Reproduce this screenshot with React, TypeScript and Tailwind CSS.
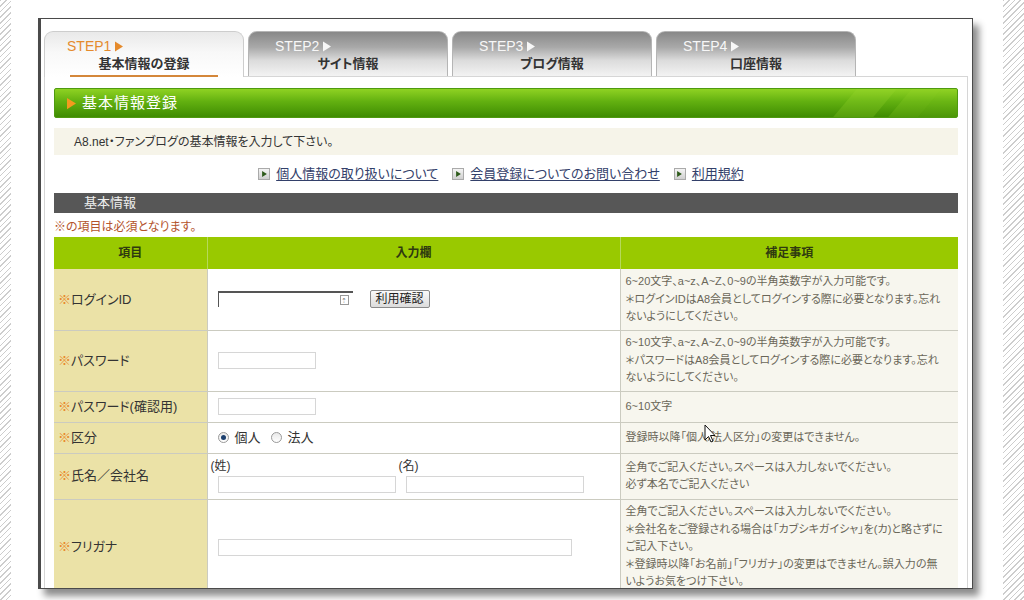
import type { ReactNode } from "react";

const hatch =
  "bg-[repeating-linear-gradient(135deg,#cdcdcd_0px,#cdcdcd_1px,transparent_1px,transparent_4px)]";

function Tri({ className }: { className: string }) {
  return (
    <svg viewBox="0 0 8 10" className={className}>
      <polygon points="0,0 8,5 0,10" fill="currentColor" />
    </svg>
  );
}

function Tab({ step, label, active }: { step: string; label: string; active?: boolean }) {
  if (active) {
    return (
      <div className="relative z-10 -mb-px h-[46px] w-[200px] rounded-t-[9px] border border-b-0 border-[#cdcdcd] bg-[linear-gradient(to_bottom,#e9e9e9,#f8f8f8_45%,#ffffff)]">
        <div className="flex items-center gap-[4px] pl-[22px] pt-[6px] text-[14px] leading-[16px] text-[#e58a2c]">
          {step}
          <Tri className="h-[11px] w-[8px]" />
        </div>
        <div className="mx-[25px] mt-[1px] border-b-2 border-[#d4873a] pb-[2px] text-center text-[13px] leading-[18px] font-bold text-[#333]">
          {label}
        </div>
      </div>
    );
  }
  return (
    <div className="h-[45px] w-[200px] rounded-t-[9px] border border-b-0 border-[#b5b5b5] bg-[linear-gradient(to_bottom,#888888,#a9a9a9_35%,#dcdcdc_65%,#f3f3f3)]">
      <div className="flex items-center gap-[4px] pl-[26px] pt-[6px] text-[14px] leading-[16px] text-[#f7f7f7]">
        {step}
        <Tri className="h-[11px] w-[8px]" />
      </div>
      <div className="mt-[1px] text-center text-[13px] leading-[18px] font-bold text-[#333]">{label}</div>
    </div>
  );
}

function LinkItem({ children }: { children: ReactNode }) {
  return (
    <span className="flex items-center gap-[6px]">
      <span className="flex h-[12px] w-[12px] items-center justify-center border border-[#aaa] bg-[linear-gradient(to_bottom,#f4f4f4,#cfcfcf)]">
        <Tri className="h-[6px] w-[5px] text-[#2d5a1a]" />
      </span>
      <span className="text-[13px] text-[#33406a] underline underline-offset-2">{children}</span>
    </span>
  );
}

function Label({ children }: { children: ReactNode }) {
  return (
    <td className="border-b border-r border-[#cbcbc0] bg-[#ebe2a7] pl-[4px] text-[13px] text-[#333]">
      <span className="text-[#e8892a]">※</span>
      {children}
    </td>
  );
}

function Note({ lines }: { lines: string[] }) {
  return (
    <td className="border-b border-[#cbcbc0] bg-[#f7f6ee] pl-[5px] align-middle text-[11px] leading-[17.4px] whitespace-nowrap text-[#6a6658]">
      {lines.map((l) => (
        <div key={l}>{l}</div>
      ))}
    </td>
  );
}

function TextBox({ w }: { w: string }) {
  return <div className={`${w} h-[17px] border border-[#d6d6d6] bg-white`} />;
}

function Radio({ on }: { on?: boolean }) {
  return (
    <span className="flex h-[11px] w-[11px] items-center justify-center rounded-full border border-[#9a9a9a] bg-[linear-gradient(to_bottom,#e8e8e8,#fff)]">
      {on && <span className="h-[5px] w-[5px] rounded-full bg-[#1c3f6e]" />}
    </span>
  );
}

export default function App() {
  return (
    <div className="relative flex h-[600px] w-[1024px] overflow-hidden bg-white [font-family:'Liberation_Sans','Noto_Sans_CJK_JP',sans-serif] [font-feature-settings:'palt']">
      <div className={`h-full w-[11px] shrink-0 ${hatch}`} />

      <div className="ml-[27px] mt-[18px] h-[571px] w-[935px] shrink-0 overflow-hidden border border-l-[3px] border-[#4a4a4a] border-l-double bg-white pl-[3px] pr-[4px] pt-[12px] shadow-[6px_7px_7px_rgba(0,0,0,0.45)]">
        <div className="flex items-end gap-[4px]">
          <Tab step="STEP1" label="基本情報の登録" active />
          <Tab step="STEP2" label="サイト情報" />
          <Tab step="STEP3" label="ブログ情報" />
          <Tab step="STEP4" label="口座情報" />
        </div>

        <div className="h-[600px] border border-[#d6d6d6] px-[9px] pt-[11px]">
          <div className="relative flex h-[30px] items-center overflow-hidden rounded-[2px] border border-[#4f9a10] bg-[linear-gradient(to_bottom,#8fd223,#62b010_45%,#3f8c02)] pl-[12px]">
            <Tri className="h-[13px] w-[9px] text-[#f39a1e]" />
            <span className="ml-[6px] text-[15px] tracking-[1px] text-white">基本情報登録</span>
            <div className="absolute left-[790px] top-0 h-full w-[40px] -skew-x-[40deg] bg-[#9ad92e]/25" />
            <div className="absolute left-[845px] top-0 h-full w-[30px] -skew-x-[40deg] bg-[#9ad92e]/20" />
            <div className="absolute left-[875px] top-0 h-full w-[40px] -skew-x-[40deg] bg-[#9ad92e]/15" />
          </div>

          <div className="mt-[10px] flex h-[27px] items-center bg-[#f6f4e9] pl-[20px] text-[12px] text-[#333]">
            A8.net・ファンブログの基本情報を入力して下さい。
          </div>

          <div className="flex h-[38px] items-center justify-center gap-[14px] pr-[10px]">
            <LinkItem>個人情報の取り扱いについて</LinkItem>
            <LinkItem>会員登録についてのお問い合わせ</LinkItem>
            <LinkItem>利用規約</LinkItem>
          </div>

          <div className="flex h-[20px] items-center bg-[#575757] pl-[30px] text-[13px] text-[#eee]">基本情報</div>

          <div className="flex h-[24px] items-center pt-[4px] text-[12px] text-[#b4532c]">※の項目は必須となります。</div>

          <table className="w-[904px] table-fixed border-collapse">
            <colgroup>
              <col className="w-[153px]" />
              <col className="w-[413px]" />
              <col className="w-[338px]" />
            </colgroup>
            <thead>
              <tr className="h-[32px] bg-[#99c900] text-[12px] font-bold text-[#2f3a10]">
                <th className="border-r border-[#b6d95a]">項目</th>
                <th className="border-r border-[#b6d95a]">入力欄</th>
                <th>補足事項</th>
              </tr>
            </thead>
            <tbody>
              <tr className="h-[61px]">
                <Label>ログインID</Label>
                <td className="border-b border-r border-[#cbcbc0] pl-[10px]">
                  <div className="flex items-center gap-[17px]">
                    <div className="flex h-[16px] w-[135px] items-center justify-end border-l border-t-2 border-[#555] pr-[4px]">
                      <span className="flex h-[10px] w-[9px] items-center justify-center border border-[#999] text-[7px] leading-none text-[#777]">
                        ⇡
                      </span>
                    </div>
                    <button className="h-[18px] rounded-[2px] border border-[#8a8a8a] bg-[linear-gradient(to_bottom,#fafafa,#dcdcdc)] px-[5px] text-[12px] leading-none text-[#222]">
                      利用確認
                    </button>
                  </div>
                </td>
                <Note
                  lines={[
                    "6~20文字、a~z、A~Z、0~9の半角英数字が入力可能です。",
                    "＊ログインIDはA8会員としてログインする際に必要となります。忘れ",
                    "ないようにしてください。",
                  ]}
                />
              </tr>
              <tr className="h-[61px]">
                <Label>パスワード</Label>
                <td className="border-b border-r border-[#cbcbc0] pl-[10px]">
                  <TextBox w="w-[98px]" />
                </td>
                <Note
                  lines={[
                    "6~10文字、a~z、A~Z、0~9の半角英数字が入力可能です。",
                    "＊パスワードはA8会員としてログインする際に必要となります。忘れ",
                    "ないようにしてください。",
                  ]}
                />
              </tr>
              <tr className="h-[31px]">
                <Label>パスワード(確認用)</Label>
                <td className="border-b border-r border-[#cbcbc0] pl-[10px]">
                  <TextBox w="w-[98px]" />
                </td>
                <Note lines={["6~10文字"]} />
              </tr>
              <tr className="h-[31px]">
                <Label>区分</Label>
                <td className="border-b border-r border-[#cbcbc0] pl-[10px]">
                  <div className="flex items-center text-[13px] text-[#333]">
                    <Radio on />
                    <span className="ml-[6px]">個人</span>
                    <span className="ml-[10px]">
                      <Radio />
                    </span>
                    <span className="ml-[6px]">法人</span>
                  </div>
                </td>
                <Note lines={["登録時以降「個人/法人区分」の変更はできません。"]} />
              </tr>
              <tr className="h-[46px]">
                <Label>氏名／会社名</Label>
                <td className="border-b border-r border-[#cbcbc0] pl-[3px]">
                  <div className="flex text-[12px] leading-[15px] text-[#333]">
                    <div className="w-[188px]">
                      (姓)
                      <div className="ml-[7px] mt-[2px]">
                        <TextBox w="w-[178px]" />
                      </div>
                    </div>
                    <div>
                      (名)
                      <div className="ml-[7px] mt-[2px]">
                        <TextBox w="w-[178px]" />
                      </div>
                    </div>
                  </div>
                </td>
                <Note lines={["全角でご記入ください。スペースは入力しないでください。", "必ず本名でご記入ください"]} />
              </tr>
              <tr className="h-[96px]">
                <Label>フリガナ</Label>
                <td className="border-b border-r border-[#cbcbc0] pl-[10px]">
                  <TextBox w="w-[354px]" />
                </td>
                <Note
                  lines={[
                    "全角でご記入ください。スペースは入力しないでください。",
                    "＊会社名をご登録される場合は「カブシキガイシャ」を(カ)と略さずに",
                    "ご記入下さい。",
                    "＊登録時以降「お名前」「フリガナ」の変更はできません。誤入力の無",
                    "いようお気をつけ下さい。",
                  ]}
                />
              </tr>
            </tbody>
          </table>
        </div>
      </div>

      <div className={`ml-auto h-full w-[21px] shrink-0 ${hatch}`} />

      <svg viewBox="0 0 12 19" className="absolute left-[704px] top-[424px] h-[19px] w-[12px]">
        <path d="M1 1 L1 16 L4.5 12.5 L7 18 L9 17 L6.5 11.5 L11 11.5 Z" fill="#fff" stroke="#111" strokeWidth="1" />
      </svg>
    </div>
  );
}
